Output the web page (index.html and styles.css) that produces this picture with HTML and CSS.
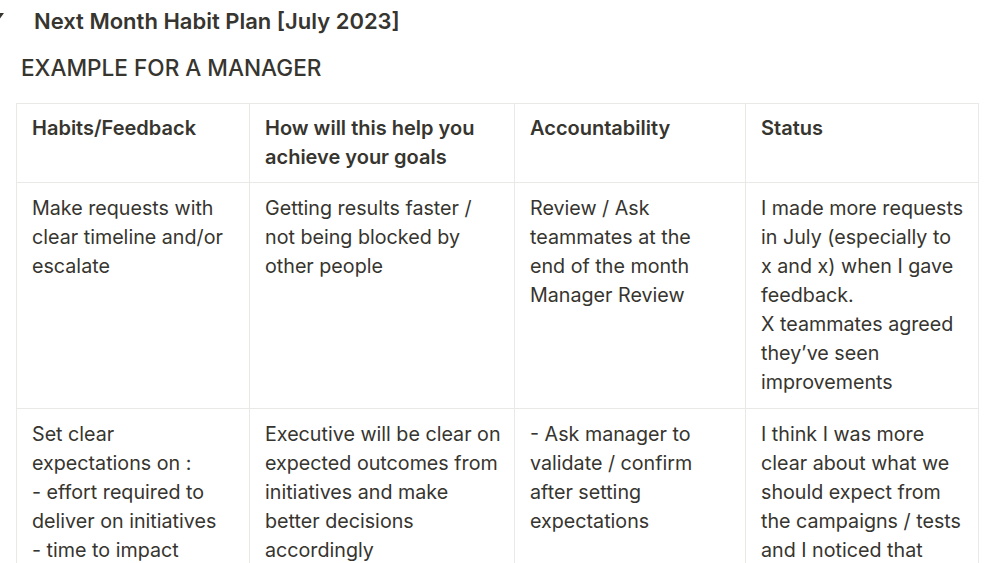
FILE: index.html
```html
<!DOCTYPE html>
<html lang="en">
<head>
<meta charset="utf-8">
<title>Next Month Habit Plan</title>
<link rel="stylesheet" href="styles.css">
</head>
<body>
<div class="page">
  <div class="toggle">
    <svg class="caret" width="10" height="10" viewBox="0 0 10 10"><path d="M0 1 L10 1 L5 8 Z" fill="#37352f"/></svg>
    <h1 class="title">Next Month Habit Plan [July 2023]</h1>
  </div>
  <h2 class="subtitle">EXAMPLE FOR A MANAGER</h2>
  <table class="plan">
    <colgroup>
      <col class="c1"><col class="c2"><col class="c3"><col class="c4">
    </colgroup>
    <thead>
      <tr>
        <th>Habits/Feedback</th>
        <th>How will this help you<br>achieve your goals</th>
        <th>Accountability</th>
        <th>Status</th>
      </tr>
    </thead>
    <tbody>
      <tr>
        <td>Make requests with<br>clear timeline and/or<br>escalate</td>
        <td>Getting results faster /<br>not being blocked by<br>other people</td>
        <td>Review / Ask<br>teammates at the<br>end of the month<br>Manager Review</td>
        <td>I made more requests<br>in July (especially to<br>x and x) when I gave<br>feedback.<br>X teammates agreed<br>they’ve seen<br>improvements</td>
      </tr>
      <tr>
        <td>Set clear<br>expectations on :<br>- effort required to<br>deliver on initiatives<br>- time to impact</td>
        <td>Executive will be clear on<br>expected outcomes from<br>initiatives and make<br>better decisions<br>accordingly</td>
        <td>- Ask manager to<br>validate / confirm<br>after setting<br>expectations</td>
        <td>I think I was more<br>clear about what we<br>should expect from<br>the campaigns / tests<br>and I noticed that</td>
      </tr>
    </tbody>
  </table>
</div>
</body>
</html>
```
FILE: styles.css
```css
html, body {
  margin: 0;
  padding: 0;
  background: #ffffff;
  overflow: hidden;
}
body {
  font-family: Inter, "Noto Sans", "Liberation Sans", sans-serif;
  color: #37352f;
}
.toggle {
  display: flex;
  align-items: center;
  height: 42px;
  margin-left: -6px;
}
.caret {
  flex: none;
  align-self: flex-start;
  margin-top: 12px;
  margin-right: 30px;
}
.title {
  margin: 0;
  font-size: 22px;
  font-weight: 600;
  line-height: 28px;
  letter-spacing: 0;
}
.subtitle {
  margin: 4px 0 0 21px;
  font-size: 22.6px;
  font-weight: 500;
  line-height: 44px;
  letter-spacing: 0;
}
.plan {
  margin: 13px 0 0 16px;
  border-collapse: collapse;
  table-layout: fixed;
  width: 962px;
  font-size: 19.7px;
  line-height: 29px;
}
.c1 { width: 233px; }
.c2 { width: 265px; }
.c3 { width: 231px; }
.c4 { width: 233px; }
.plan th, .plan td {
  border: 1px solid #e9e9e7;
  padding: 10px 10px 10px 15px;
  text-align: left;
  vertical-align: top;
  white-space: nowrap;
  overflow: hidden;
}
.plan th {
  font-weight: 600;
  font-size: 20px;
}
.plan td {
  font-weight: 400;
  padding-top: 11px;
  padding-bottom: 11px;
}
```
